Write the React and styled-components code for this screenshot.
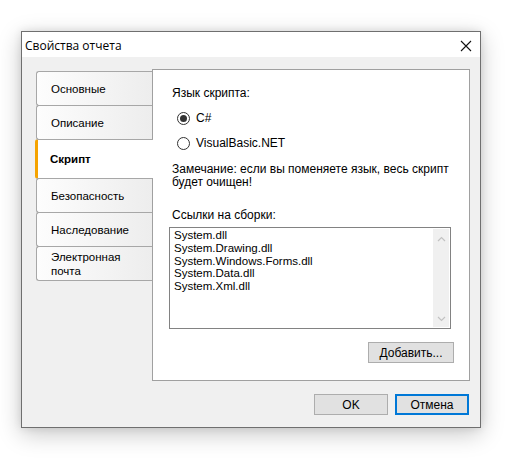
import styled, { createGlobalStyle } from 'styled-components'

const GlobalStyle = createGlobalStyle`
  body {
    margin: 0;
    background: #ffffff;
    font-family: "Liberation Sans", Arial, sans-serif;
  }
`

const tabs = [
  { id: 1, label: 'Основные' },
  { id: 2, label: 'Описание' },
  { id: 3, label: 'Скрипт', active: true },
  { id: 4, label: 'Безопасность' },
  { id: 5, label: 'Наследование' },
  { id: 6, label: 'Электронная почта' },
]

const assemblies = [
  'System.dll',
  'System.Drawing.dll',
  'System.Windows.Forms.dll',
  'System.Data.dll',
  'System.Xml.dll',
]

const App = () => {
  return (
    <>
      <GlobalStyle />
      <Page>
        <Window>
          <TitleBar>
            <Title>Свойства отчета</Title>
            <CloseBtn>
              <svg width='12' height='12' viewBox='0 0 12 12'>
                <path d='M1 1 L11 11 M11 1 L1 11' stroke='#111' strokeWidth='1.1' fill='none' />
              </svg>
            </CloseBtn>
          </TitleBar>
          <Body>
            <Main>
              <TabList>
                {tabs.map((tab) => (
                  <Tab key={tab.id} $active={tab.active}>
                    {tab.id === 6 ? (
                      <span>Электронная<br />почта</span>
                    ) : (
                      tab.label
                    )}
                  </Tab>
                ))}
              </TabList>
              <Panel>
                <Label>Язык скрипта:</Label>
                <RadioGroup>
                  <RadioRow>
                    <RadioCircle $checked />
                    <span>C#</span>
                  </RadioRow>
                  <RadioRow>
                    <RadioCircle />
                    <span>VisualBasic.NET</span>
                  </RadioRow>
                </RadioGroup>
                <Note>
                  Замечание: если вы поменяете язык, весь скрипт
                  <br />
                  будет очищен!
                </Note>
                <Label $top={19}>Ссылки на сборки:</Label>
                <ListBox>
                  <ListItems>
                    {assemblies.map((a) => (
                      <div key={a}>{a}</div>
                    ))}
                  </ListItems>
                  <ScrollBar>
                    <svg width='9' height='6' viewBox='0 0 9 6'>
                      <path d='M1 5 L4.5 1.5 L8 5' stroke='#c2c2c2' strokeWidth='1.2' fill='none' />
                    </svg>
                    <svg width='9' height='6' viewBox='0 0 9 6'>
                      <path d='M1 1 L4.5 4.5 L8 1' stroke='#c2c2c2' strokeWidth='1.2' fill='none' />
                    </svg>
                  </ScrollBar>
                </ListBox>
                <AddRow>
                  <Button $width={86}>Добавить...</Button>
                </AddRow>
              </Panel>
            </Main>
            <Footer>
              <Button $width={74}>OK</Button>
              <Button $width={74} $default>Отмена</Button>
            </Footer>
          </Body>
        </Window>
      </Page>
    </>
  )
}

const Page = styled.div`
  padding: 31px 0 0 21px;
  height: 466px;
  box-sizing: border-box;
`

const Window = styled.div`
  width: 460px;
  height: 397px;
  box-sizing: border-box;
  border: 1px solid #6f6f6f;
  background: #f0f0f0;
  display: flex;
  flex-direction: column;
  box-shadow: 0 6px 22px rgba(0, 0, 0, 0.22), 0 0 8px rgba(0, 0, 0, 0.1);
`

const TitleBar = styled.div`
  height: 25px;
  background: #ffffff;
  display: flex;
  align-items: center;
  justify-content: space-between;
  padding: 0 8px 0 3px;
`

const Title = styled.div`
  font-family: "Open Sans", "Noto Sans", sans-serif;
  font-size: 12px;
  color: #000;
  padding-top: 1px;
`

const CloseBtn = styled.div`
  width: 12px;
  height: 12px;
  display: flex;
  margin-top: 2px;
`

const Body = styled.div`
  flex: 1;
  display: flex;
  flex-direction: column;
  padding: 12px 10px 0 13px;
`

const Main = styled.div`
  display: flex;
  height: 312px;
`

const TabList = styled.div`
  width: 118px;
  margin-right: -1px;
  padding-top: 2px;
  display: flex;
  flex-direction: column;
  position: relative;
  z-index: 1;
`

const Tab = styled.div`
  height: ${(p) => (p.$active ? '40px' : '35px')};
  margin-top: -1px;
  margin-left: ${(p) => (p.$active ? '0' : '1px')};
  box-sizing: border-box;
  border: 1px solid #a7a7a7;
  border-right: ${(p) => (p.$active ? 'none' : '1px solid #a0a0a0')};
  border-left: ${(p) => (p.$active ? '3px solid #f5a300' : '1px solid #a7a7a7')};
  border-radius: 3px 0 0 3px;
  background: ${(p) => (p.$active ? '#ffffff' : 'linear-gradient(90deg, #fdfdfd, #ededed)')};
  display: flex;
  align-items: center;
  padding-left: ${(p) => (p.$active ? '12px' : '14px')};
  font-size: 11.5px;
  font-weight: ${(p) => (p.$active ? 700 : 400)};
  color: #000;
  line-height: 14px;
  white-space: nowrap;

  &:first-child {
    margin-top: 0;
  }
`

const Panel = styled.div`
  flex: 1;
  background: #ffffff;
  border: 1px solid #a0a0a0;
  padding: 16px 15px 0 19px;
  display: flex;
  flex-direction: column;
  font-size: 12px;
  color: #000;
  white-space: nowrap;
`

const Label = styled.div`
  line-height: 14px;
  margin-top: ${(p) => p.$top || 0}px;
`

const RadioGroup = styled.div`
  display: flex;
  flex-direction: column;
  gap: 11px;
  margin: 11px 0 0 5px;
`

const RadioRow = styled.div`
  display: flex;
  align-items: center;
  gap: 6px;
  height: 14px;
`

const RadioCircle = styled.div`
  width: 13px;
  height: 13px;
  box-sizing: border-box;
  border: 1px solid #333;
  border-radius: 50%;
  display: flex;
  align-items: center;
  justify-content: center;

  &::after {
    content: '';
    width: 7px;
    height: 7px;
    border-radius: 50%;
    background: ${(p) => (p.$checked ? '#333' : 'transparent')};
  }
`

const Note = styled.div`
  margin-top: 13px;
  line-height: 13px;
`

const ListBox = styled.div`
  margin: 5px 3px 0 -3px;
  height: 102px;
  box-sizing: border-box;
  border: 1px solid #828282;
  display: flex;
  justify-content: space-between;
  padding: 1px;
`

const ListItems = styled.div`
  padding: 0 0 0 3px;
  line-height: 12.8px;
  font-size: 11.5px;
`

const ScrollBar = styled.div`
  width: 16px;
  background: #f0f0f0;
  display: flex;
  flex-direction: column;
  align-items: center;
  justify-content: space-between;
  padding: 7px 0 5px;
  box-sizing: border-box;
`

const AddRow = styled.div`
  display: flex;
  justify-content: flex-end;
  margin-top: 13px;
`

const Button = styled.button`
  width: ${(p) => p.$width}px;
  height: 21px;
  box-sizing: border-box;
  background: #e1e1e1;
  border: ${(p) => (p.$default ? '2px solid #0078d7' : '1px solid #adadad')};
  font-family: "Liberation Sans", Arial, sans-serif;
  font-size: 12px;
  color: #000;
  padding: 0;
`

const Footer = styled.div`
  display: flex;
  justify-content: flex-end;
  gap: 7px;
  margin-top: 13px;
  padding-right: 1px;
`

export default App
